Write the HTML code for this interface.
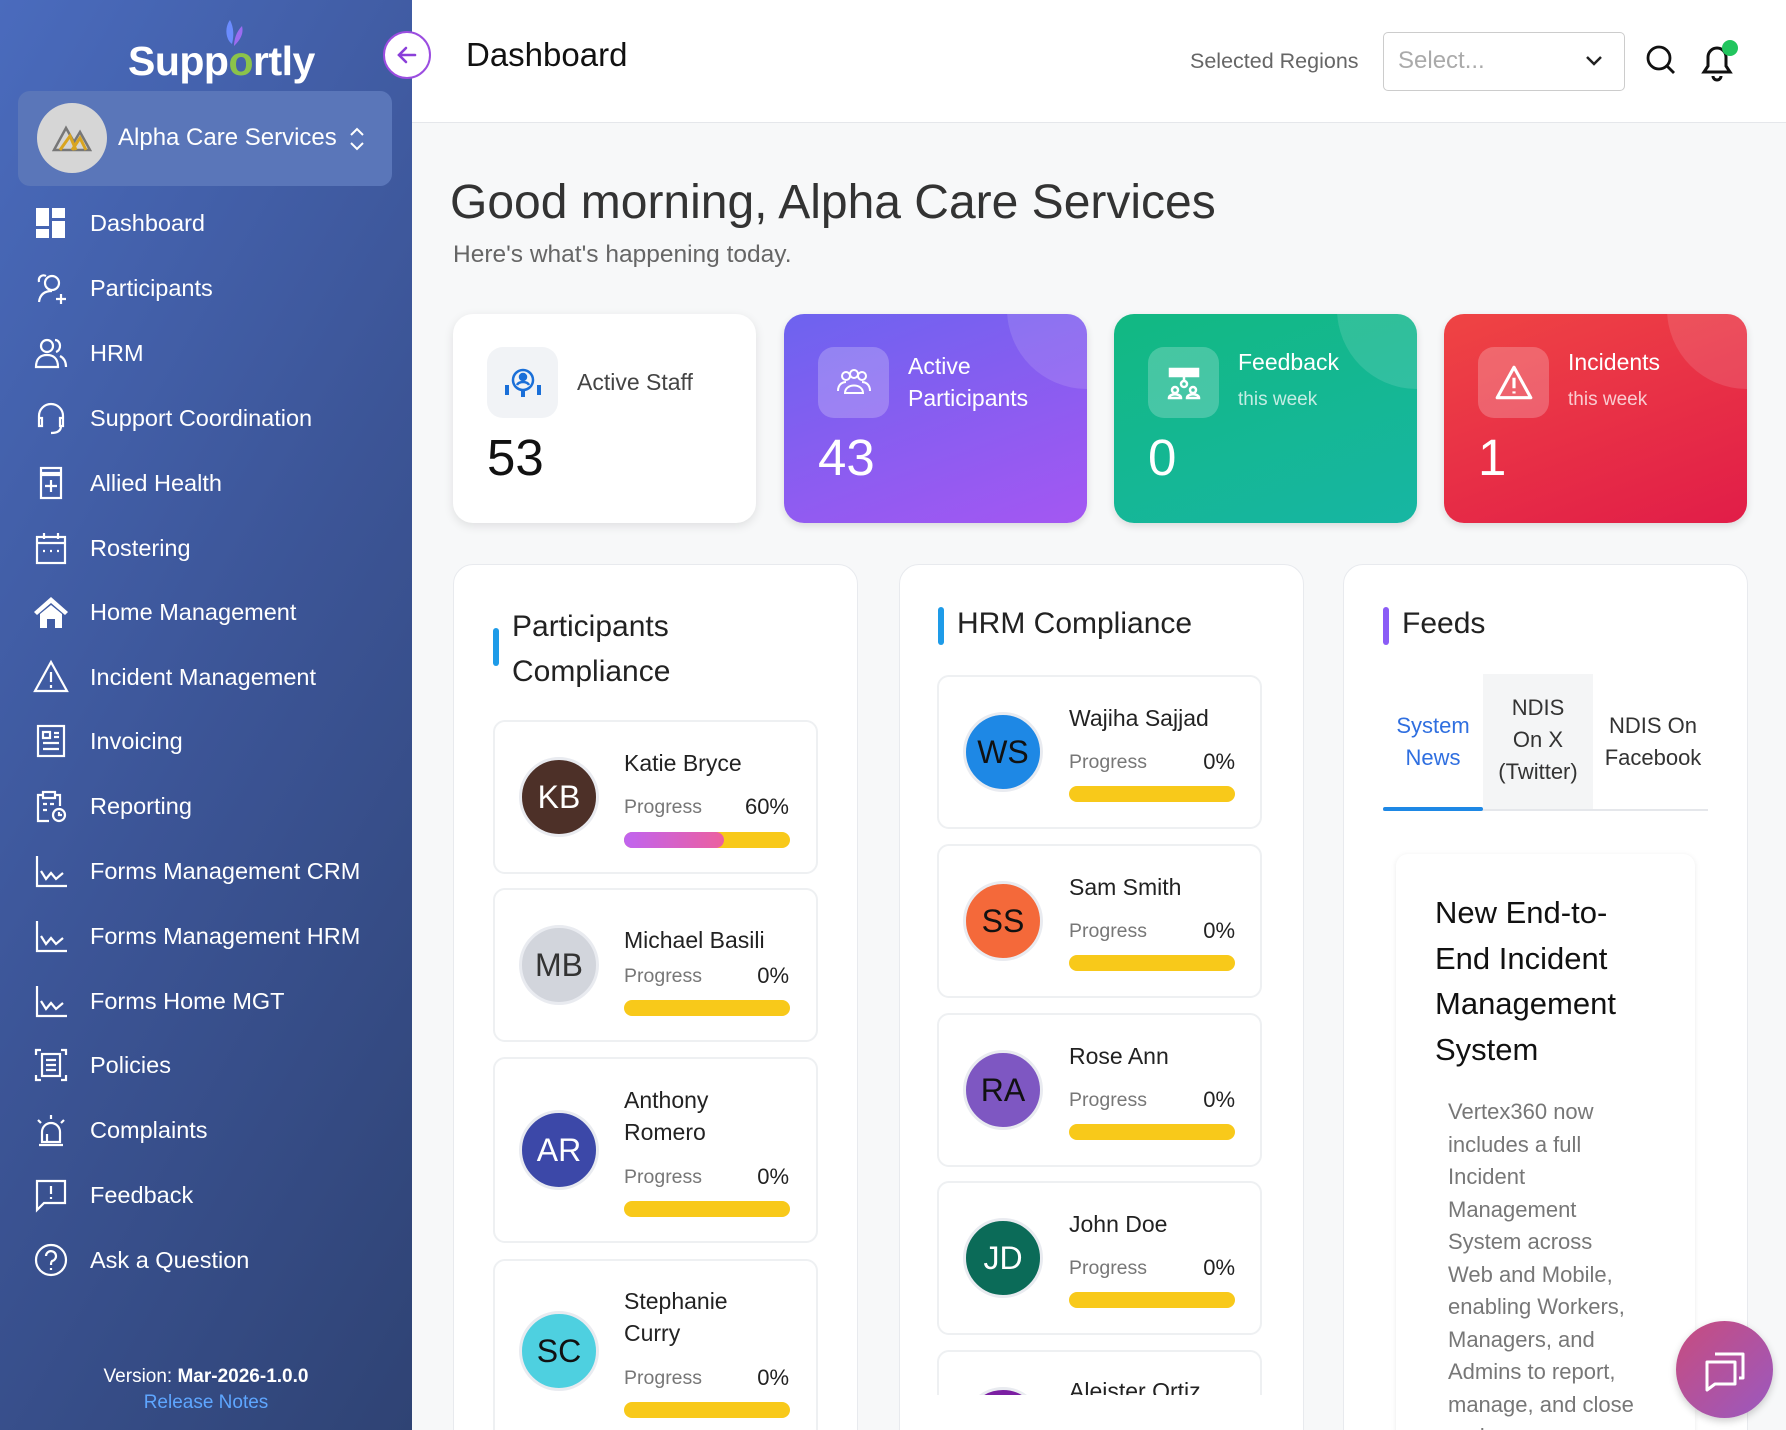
<!DOCTYPE html>
<html><head><meta charset="utf-8"><style>
*{box-sizing:border-box;margin:0;padding:0}
html,body{width:1786px;height:1430px;overflow:hidden}
body{font-family:"Liberation Sans",sans-serif;background:#f7f8f9;color:#222}
#root{position:relative;width:1786px;height:1430px;overflow:hidden;background:#f7f8f9}
.a{position:absolute}
#sb{left:0;top:0;width:412px;height:1430px;background:linear-gradient(120deg,#4a6bbd 0%,#3c5597 50%,#2f4374 100%)}
.nav{position:absolute;left:0;width:412px;height:40px;display:flex;align-items:center;color:#fff;font-size:23.5px}
.nav svg{position:absolute;left:33px;width:36px;height:36px;fill:none;stroke:#fff;stroke-width:2.2}
.nav span{position:absolute;left:90px}
#hdr{left:412px;top:0;width:1374px;height:123px;background:#fff;border-bottom:1px solid #e5e7eb}
.card{position:absolute;top:314px;width:303px;height:209px;border-radius:20px;overflow:hidden;box-shadow:0 3px 8px rgba(0,0,0,.12)}
.card .ib{position:absolute;left:34px;top:33px;width:71px;height:71px;border-radius:16px;background:rgba(255,255,255,.22);display:flex;align-items:center;justify-content:center}
.card .lb{position:absolute;left:124px;color:#fff;font-size:23px;line-height:32px}
.card .num{position:absolute;left:34px;font-size:51px;color:#fff}
.card .dec{position:absolute;right:-80px;top:-85px;width:160px;height:160px;border-radius:50%;background:rgba(255,255,255,.12)}
.pn{position:absolute;top:564px;width:405px;height:900px;background:#fff;border:1px solid #e8eaee;border-radius:20px}
.pt{position:absolute;font-size:30px;color:#222}
.bar4{position:absolute;width:6px;height:38px;border-radius:3px}
.pc{position:absolute;width:325px;background:#fff;border:2px solid #eef0f2;border-radius:12px}
.av{position:absolute;width:80px;height:80px;border-radius:50%;border:3px solid #e9ebf0;display:flex;align-items:center;justify-content:center;font-size:32px;color:#fff}
.nm{position:absolute;font-size:23px;color:#222;line-height:32px}
.pg{position:absolute;font-size:19.5px;color:#777}
.pp{position:absolute;font-size:22px;color:#222;text-align:right}
.br{position:absolute;height:16px;border-radius:8px;background:#f8c91a}
</style></head><body><div id="root">
<div id="sb" class="a">
 <div class="a" style="left:128px;top:38px;font-size:41px;font-weight:bold;color:#fff;letter-spacing:-0.5px">Supp<span style="color:#8bc34a">o</span>rtly</div>
 <svg class="a" style="left:222px;top:18px" width="24" height="32" viewBox="0 0 24 32"><path d="M8 2 C2 10 4 22 10 26 C12 18 12 10 8 2Z" fill="#6b8cff"/><path d="M20 8 C14 14 12 22 12 28 C18 22 22 16 20 8Z" fill="#9b6cf0"/></svg>
 <div class="a" style="left:18px;top:91px;width:374px;height:95px;border-radius:12px;background:#5a76b9"></div>
 <div class="a" style="left:37px;top:103px;width:70px;height:70px;border-radius:50%;background:#d6d6d6"></div>
 <svg class="a" style="left:52px;top:124px" width="40" height="28" viewBox="0 0 40 28"><path d="M2 26 L14 4 L22 18 L28 8 L38 26Z" fill="none" stroke="#777" stroke-width="2.5"/><path d="M8 26 L18 12 L24 26 M20 26 L28 14 L34 26" stroke="#d9a520" stroke-width="3" fill="none"/></svg>
 <div class="a" style="left:118px;top:124px;font-size:24px;color:#fff">Alpha Care Services</div>
 <svg class="a" style="left:348px;top:126px" width="18" height="26" viewBox="0 0 18 26" fill="none" stroke="#fff" stroke-width="2"><path d="M3 9 L9 3 L15 9 M3 17 L9 23 L15 17"/></svg>

 <div class="nav" style="top:203px"><svg viewBox="0 0 36 36" style="fill:#fff;stroke:none"><rect x="3" y="3" width="13" height="18"/><rect x="19" y="3" width="13" height="10"/><rect x="3" y="24" width="13" height="9"/><rect x="19" y="16" width="13" height="17"/></svg><span>Dashboard</span></div>
 <div class="nav" style="top:268px"><svg viewBox="0 0 36 36"><circle cx="19" cy="13" r="7"/><path d="M6 32 C7 24 12 21 19 21 M13 6 C9 4 5 7 6 12 M28 24 V34 M23 29 H33"/></svg><span>Participants</span></div>
 <div class="nav" style="top:333px"><svg viewBox="0 0 36 36"><circle cx="14" cy="11" r="6"/><path d="M3 32 C3 23 8 20 14 20 C20 20 25 23 25 32Z M22 5 C28 5 29 15 23 17 M27 21 C31 23 33 27 33 32"/></svg><span>HRM</span></div>
 <div class="nav" style="top:398px"><svg viewBox="0 0 36 36"><path d="M6 20 V16 A12 12 0 0 1 30 16 V20 M6 18 H9 V26 H6Z M27 18 H30 V26 H27Z M28 26 C28 31 24 33 18 33"/></svg><span>Support Coordination</span></div>
 <div class="nav" style="top:463px"><svg viewBox="0 0 36 36"><rect x="8" y="3" width="20" height="5"/><rect x="8" y="10" width="20" height="23"/><path d="M18 15 V27 M12 21 H24"/></svg><span>Allied Health</span></div>
 <div class="nav" style="top:528px"><svg viewBox="0 0 36 36"><rect x="4" y="7" width="28" height="26"/><path d="M4 13 H32 M11 3 V9 M25 3 V9 M10 21 H12 M17 21 H19 M24 21 H26"/></svg><span>Rostering</span></div>
 <div class="nav" style="top:592px"><svg viewBox="0 0 36 36" style="fill:#fff;stroke:none"><path d="M18 3 L1 18 L4 21 L18 9 L32 21 L35 18Z M7 20 L18 11 L29 20 V34 H22 V25 H14 V34 H7Z"/></svg><span>Home Management</span></div>
 <div class="nav" style="top:657px"><svg viewBox="0 0 36 36"><path d="M18 3 L34 32 H2Z M18 13 V23 M18 26 V29"/></svg><span>Incident Management</span></div>
 <div class="nav" style="top:721px"><svg viewBox="0 0 36 36"><rect x="5" y="3" width="26" height="30"/><path d="M10 9 H17 V15 H10Z M21 10 H26 M21 14 H26 M10 20 H26 M10 26 H26"/></svg><span>Invoicing</span></div>
 <div class="nav" style="top:786px"><svg viewBox="0 0 36 36"><path d="M22 7 H27 V18 M16 33 H5 V7 H10 M10 4 H22 V10 H10Z M10 16 H14 M10 22 H14 M17 16 H21"/><circle cx="26" cy="27" r="6"/><path d="M26 24 V27 H29"/></svg><span>Reporting</span></div>
 <div class="nav" style="top:851px"><svg viewBox="0 0 36 36"><path d="M4 3 V33 H34 M8 18 L13 26 L18 20 L23 26 L30 20"/></svg><span>Forms Management CRM</span></div>
 <div class="nav" style="top:916px"><svg viewBox="0 0 36 36"><path d="M4 3 V33 H34 M8 18 L13 26 L18 20 L23 26 L30 20"/></svg><span>Forms Management HRM</span></div>
 <div class="nav" style="top:981px"><svg viewBox="0 0 36 36"><path d="M4 3 V33 H34 M8 18 L13 26 L18 20 L23 26 L30 20"/></svg><span>Forms Home MGT</span></div>
 <div class="nav" style="top:1045px"><svg viewBox="0 0 36 36"><path d="M3 8 V3 H8 M28 3 H33 V8 M33 28 V33 H28 M8 33 H3 V28"/><rect x="9" y="7" width="18" height="22"/><path d="M13 13 H23 M13 18 H23 M13 23 H23"/></svg><span>Policies</span></div>
 <div class="nav" style="top:1110px"><svg viewBox="0 0 36 36"><path d="M9 30 V20 A9 9 0 0 1 27 20 V30Z M6 33 H30 M18 3 V7 M5 8 L8 11 M31 8 L28 11 M14 30 V22"/></svg><span>Complaints</span></div>
 <div class="nav" style="top:1175px"><svg viewBox="0 0 36 36"><path d="M4 4 H32 V26 H11 L4 33Z M18 9 V17 M18 20 V22"/></svg><span>Feedback</span></div>
 <div class="nav" style="top:1240px"><svg viewBox="0 0 36 36"><circle cx="18" cy="18" r="15"/><path d="M13 14 A5 5 0 1 1 19 19 C18 20 18 21 18 23 M18 26 V28"/></svg><span>Ask a Question</span></div>

 <div class="a" style="left:0;width:412px;top:1366px;text-align:center;font-size:19px;color:#fff">Version: <b>Mar-2026-1.0.0</b></div>
 <div class="a" style="left:0;width:412px;top:1392px;text-align:center;font-size:19px;color:#5ea6ff">Release Notes</div>
</div>

<div id="hdr" class="a"></div>
<div class="a" style="left:383px;top:31px;width:48px;height:48px;border-radius:50%;background:#fff;border:2px solid #9b4de0"></div>
<svg class="a" style="left:393px;top:41px" width="28" height="28" viewBox="0 0 28 28" fill="none" stroke="#8b3fd9" stroke-width="2.6" stroke-linecap="round"><path d="M22 14 H6 M13 7 L6 14 L13 21"/></svg>
<div class="a" style="left:466px;top:36px;font-size:33px;color:#111">Dashboard</div>
<div class="a" style="left:1190px;top:49px;font-size:21.5px;color:#666">Selected Regions</div>
<div class="a" style="left:1383px;top:32px;width:242px;height:59px;border:1px solid #ccc;border-radius:5px;background:#fff"></div>
<div class="a" style="left:1398px;top:47px;font-size:24px;color:#aaa">Select...</div>
<svg class="a" style="left:1584px;top:53px" width="20" height="16" viewBox="0 0 20 16" fill="none" stroke="#222" stroke-width="2.5"><path d="M3 4 L10 11 L17 4"/></svg>
<svg class="a" style="left:1645px;top:44px" width="32" height="32" viewBox="0 0 32 32" fill="none" stroke="#111" stroke-width="2.8"><circle cx="14" cy="14" r="11"/><path d="M22 22 L29 29"/></svg>
<svg class="a" style="left:1698px;top:40px" width="38" height="42" viewBox="0 0 38 42" fill="none" stroke="#111" stroke-width="3"><path d="M6 32 H32 L28 26 V17 A9 9 0 0 0 10 17 V26Z M15 36 A4 4 0 0 0 23 36"/></svg>
<div class="a" style="left:1722px;top:40px;width:16px;height:16px;border-radius:50%;background:#22c55e"></div>

<div class="a" style="left:450px;top:175px;font-size:48px;color:#333">Good morning, Alpha Care Services</div>
<div class="a" style="left:453px;top:241px;font-size:24.5px;color:#666">Here's what's happening today.</div>

<div class="card" style="left:453px;background:#fff;box-shadow:0 3px 10px rgba(0,0,0,.1)">
 <div class="ib" style="background:#f1f3f6"><svg width="40" height="40" viewBox="0 0 40 40" fill="none" stroke="#1a6fd8" stroke-width="2.5"><circle cx="20" cy="17" r="10"/><circle cx="20" cy="14" r="3" fill="#1a6fd8"/><path d="M14 22 C16 18 24 18 26 22"/><path d="M4 22 V32 M36 22 V32 M20 28 V34" stroke-width="4"/></svg></div>
 <div class="lb" style="color:#444;top:52px">Active Staff</div>
 <div class="num" style="top:114px;color:#111">53</div>
</div>
<div class="card" style="left:784px;background:linear-gradient(160deg,#6d63ef,#a457f2)">
 <div class="dec"></div><div class="ib"><svg width="40" height="40" viewBox="0 0 40 40" fill="none" stroke="#fff" stroke-width="2"><circle cx="12" cy="13" r="4"/><circle cx="20" cy="11" r="4"/><circle cx="28" cy="13" r="4"/><path d="M4 28 C4 20 10 19 12 19 M36 28 C36 20 30 19 28 19 M11 30 C11 20 29 20 29 30Z"/></svg></div>
 <div class="lb" style="top:36px">Active<br>Participants</div>
 <div class="num" style="top:114px">43</div>
</div>
<div class="card" style="left:1114px;background:linear-gradient(160deg,#12b882,#17b6a3)">
 <div class="dec"></div><div class="ib"><svg width="40" height="40" viewBox="0 0 40 40" fill="none" stroke="#fff" stroke-width="2.5"><rect x="6" y="6" width="28" height="7" fill="#fff"/><path d="M20 13 V17"/><circle cx="20" cy="21" r="3"/><circle cx="11" cy="27" r="3"/><circle cx="29" cy="27" r="3"/><path d="M5 35 C5 30 17 30 17 35Z M23 35 C23 30 35 30 35 35Z"/></svg></div>
 <div class="lb" style="top:32px">Feedback</div>
 <div class="lb" style="top:70px;font-size:19px;color:rgba(255,255,255,.75)">this week</div>
 <div class="num" style="top:114px">0</div>
</div>
<div class="card" style="left:1444px;background:linear-gradient(160deg,#ef4444,#e11d48)">
 <div class="dec"></div><div class="ib"><svg width="42" height="42" viewBox="0 0 40 40" fill="none" stroke="#fff" stroke-width="3"><path d="M20 5 L36 34 H4Z" stroke-linejoin="round"/><path d="M20 15 V25 M20 28 V30"/></svg></div>
 <div class="lb" style="top:32px">Incidents</div>
 <div class="lb" style="top:70px;font-size:19px;color:rgba(255,255,255,.75)">this week</div>
 <div class="num" style="top:114px">1</div>
</div>

<div class="pn" style="left:453px"></div>
<div class="bar4" style="left:493px;top:628px;background:#1e9be8"></div>
<div class="pt" style="left:512px;top:604px;line-height:45px">Participants<br>Compliance</div>

<div class="pc" style="left:493px;top:720px;height:154px"></div>
<div class="av" style="left:519px;top:757px;background:#4d3028">KB</div>
<div class="nm" style="left:624px;top:747px">Katie Bryce</div>
<div class="pg" style="left:624px;top:796px">Progress</div><div class="pp" style="left:700px;width:89px;top:794px">60%</div>
<div class="br" style="left:624px;top:832px;width:166px"></div><div class="br" style="left:624px;top:832px;width:100px;background:linear-gradient(90deg,#c064f0,#ec5f9f)"></div>

<div class="pc" style="left:493px;top:888px;height:154px"></div>
<div class="av" style="left:519px;top:925px;background:#d2d5dc;color:#333">MB</div>
<div class="nm" style="left:624px;top:924px">Michael Basili</div>
<div class="pg" style="left:624px;top:965px">Progress</div><div class="pp" style="left:700px;width:89px;top:963px">0%</div>
<div class="br" style="left:624px;top:1000px;width:166px"></div>

<div class="pc" style="left:493px;top:1057px;height:186px"></div>
<div class="av" style="left:519px;top:1110px;background:#3c48a8">AR</div>
<div class="nm" style="left:624px;top:1084px">Anthony<br>Romero</div>
<div class="pg" style="left:624px;top:1166px">Progress</div><div class="pp" style="left:700px;width:89px;top:1164px">0%</div>
<div class="br" style="left:624px;top:1201px;width:166px"></div>

<div class="pc" style="left:493px;top:1259px;height:200px"></div>
<div class="av" style="left:519px;top:1311px;background:#4ed0e0;color:#111">SC</div>
<div class="nm" style="left:624px;top:1285px">Stephanie<br>Curry</div>
<div class="pg" style="left:624px;top:1367px">Progress</div><div class="pp" style="left:700px;width:89px;top:1365px">0%</div>
<div class="br" style="left:624px;top:1402px;width:166px"></div>

<div class="pn" style="left:899px"></div>
<div class="bar4" style="left:938px;top:607px;background:#1e9be8"></div>
<div class="pt" style="left:957px;top:607px">HRM Compliance</div>
<div class="a" style="left:899px;top:670px;width:405px;height:725px;overflow:hidden">
 <div class="pc" style="left:38px;top:5px;height:154px"></div>
 <div class="av" style="left:64px;top:42px;background:#1e88e5;color:#111">WS</div>
 <div class="nm" style="left:170px;top:32px">Wajiha Sajjad</div>
 <div class="pg" style="left:170px;top:81px">Progress</div><div class="pp" style="left:246px;width:90px;top:79px">0%</div>
 <div class="br" style="left:170px;top:116px;width:166px"></div>

 <div class="pc" style="left:38px;top:174px;height:154px"></div>
 <div class="av" style="left:64px;top:211px;background:#f4693a;color:#111">SS</div>
 <div class="nm" style="left:170px;top:201px">Sam Smith</div>
 <div class="pg" style="left:170px;top:250px">Progress</div><div class="pp" style="left:246px;width:90px;top:248px">0%</div>
 <div class="br" style="left:170px;top:285px;width:166px"></div>

 <div class="pc" style="left:38px;top:343px;height:154px"></div>
 <div class="av" style="left:64px;top:380px;background:#7e57c2;color:#111">RA</div>
 <div class="nm" style="left:170px;top:370px">Rose Ann</div>
 <div class="pg" style="left:170px;top:419px">Progress</div><div class="pp" style="left:246px;width:90px;top:417px">0%</div>
 <div class="br" style="left:170px;top:454px;width:166px"></div>

 <div class="pc" style="left:38px;top:511px;height:154px"></div>
 <div class="av" style="left:64px;top:548px;background:#0b6b58">JD</div>
 <div class="nm" style="left:170px;top:538px">John Doe</div>
 <div class="pg" style="left:170px;top:587px">Progress</div><div class="pp" style="left:246px;width:90px;top:585px">0%</div>
 <div class="br" style="left:170px;top:622px;width:166px"></div>

 <div class="pc" style="left:38px;top:680px;height:154px"></div>
 <div class="av" style="left:64px;top:717px;background:#7b1fa2"></div>
 <div class="nm" style="left:170px;top:705px">Aleister Ortiz</div>
</div>

<div class="pn" style="left:1343px"></div>
<div class="bar4" style="left:1383px;top:607px;background:#8b5cf6"></div>
<div class="pt" style="left:1402px;top:607px">Feeds</div>
<div class="a" style="left:1383px;top:809px;width:325px;height:2px;background:#e5e7eb"></div>
<div class="a" style="left:1483px;top:674px;width:110px;height:135px;background:#f4f5f6"></div>
<div class="a" style="left:1383px;top:807px;width:100px;height:4px;background:#1e88e5;border-radius:2px"></div>
<div class="a" style="left:1383px;top:710px;width:100px;text-align:center;font-size:22px;line-height:32px;color:#2f6fe0">System<br>News</div>
<div class="a" style="left:1483px;top:692px;width:110px;text-align:center;font-size:22px;line-height:32px;color:#333">NDIS<br>On X<br>(Twitter)</div>
<div class="a" style="left:1593px;top:710px;width:120px;text-align:center;font-size:22px;line-height:32px;color:#333">NDIS On<br>Facebook</div>
<div class="a" style="left:1396px;top:854px;width:299px;height:600px;background:#fff;border-radius:12px;box-shadow:0 1px 6px rgba(0,0,0,.08)"></div>
<div class="a" style="left:1435px;top:890px;font-size:31px;line-height:45.5px;color:#111">New End-to-<br>End Incident<br>Management<br>System</div>
<div class="a" style="left:1448px;top:1096px;font-size:22px;line-height:32.5px;color:#777">Vertex360 now<br>includes a full<br>Incident<br>Management<br>System across<br>Web and Mobile,<br>enabling Workers,<br>Managers, and<br>Admins to report,<br>manage, and close<br>and...</div>

<div class="a" style="left:1676px;top:1321px;width:97px;height:97px;border-radius:50%;background:linear-gradient(135deg,#c84c7e,#9a59c0);box-shadow:0 3px 8px rgba(0,0,0,.2)"></div>
<svg class="a" style="left:1701px;top:1346px" width="48" height="48" viewBox="0 0 48 48" fill="none" stroke="#fff" stroke-width="3" stroke-linejoin="round"><path d="M14 8 H42 V32 H38"/><path d="M6 16 H34 V38 H14 L6 44Z"/></svg>
</div></body></html>
